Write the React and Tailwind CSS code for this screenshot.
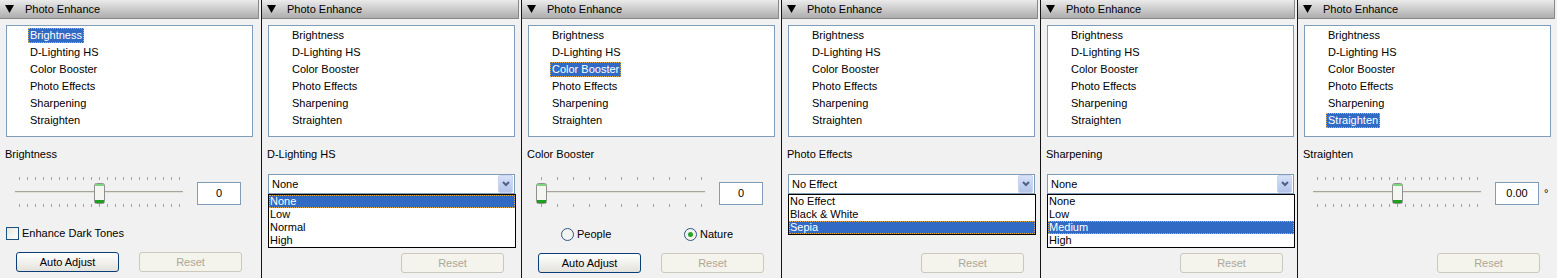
import clsx from "clsx";

const ITEMS = [
  "Brightness",
  "D-Lighting HS",
  "Color Booster",
  "Photo Effects",
  "Sharpening",
  "Straighten",
];

const Header = () => (
  <div className="h-[19px] mr-[2px] shrink-0 flex items-center bg-linear-to-b from-[#ebebeb] to-[#adadad] border-b border-r border-[#888888]">
    <svg width="9" height="8" className="ml-[5px] block">
      <polygon points="0,0 9,0 4.5,8" fill="#000" />
    </svg>
    <span className="ml-[11px] mt-[1px] leading-none">Photo Enhance</span>
  </div>
);

const ListBox = ({ selected }) => (
  <div className="mt-[6px] ml-[6px] w-[247px] h-[112px] shrink-0 border border-[#7f9db9] bg-white pt-[2px]">
    {ITEMS.map((item, i) => (
      <div key={item} className="h-[17px] pl-[21px] flex items-start">
        <span
          className={clsx(
            "h-[15px] px-[2px] leading-[15px]",
            i === selected &&
              "bg-[#316ac5] text-white outline-1 outline-dotted outline-[#e3a94a] -outline-offset-1"
          )}
        >
          {item}
        </span>
      </div>
    ))}
  </div>
);

const Label = ({ children }) => (
  <div className="mt-[11px] ml-[5px] h-[13px] leading-[13px] shrink-0">{children}</div>
);

const Slider = ({ ticks, thumb }) => {
  const step = 160 / (ticks - 1);
  return (
    <svg width="190" height="32" className="block shrink-0">
      {Array.from({ length: ticks }).map((_, i) => {
        const x = Math.round(19 + i * step) + 0.5;
        return (
          <g key={i} stroke="#a3a3a3">
            <line x1={x} x2={x} y1={1} y2={4} />
            <line x1={x} x2={x} y1={28} y2={31} />
          </g>
        );
      })}
      <rect x="15" y="15" width="168" height="1" fill="#a6a49b" />
      <rect x="15" y="16" width="168" height="1" fill="#e2e0d8" />
      <rect x={thumb + 0.5} y="7.5" width="10" height="20" rx="2" fill="#f5f5f1" stroke="#8f8f8f" />
      <rect x={thumb + 1} y="8" width="9" height="2" fill="#7fd27f" />
      <rect x={thumb + 1} y="24" width="9" height="3" fill="#1f9f1f" />
    </svg>
  );
};

const ValueBox = ({ children }) => (
  <div className="ml-[7px] mt-[6px] w-[44px] h-[23px] shrink-0 border border-[#7f9db9] bg-white flex items-center justify-center">
    {children}
  </div>
);

const Radio = ({ checked, label }) => (
  <div className="flex items-center">
    <svg width="13" height="13" className="block">
      <circle cx="6.5" cy="6.5" r="6" fill="#f3f3ef" stroke="#2f5582" />
      {checked && <circle cx="6.5" cy="6.5" r="2.5" fill="#27a327" />}
    </svg>
    <span className="ml-[3px]">{label}</span>
  </div>
);

const Combo = ({ value, options, selected }) => (
  <div className="relative mt-[13px] ml-[6px] w-[247px] h-[20px] shrink-0 border border-[#7f9db9] bg-white flex items-center">
    <span className="pl-[3px] flex-1">{value}</span>
    <div className="self-stretch w-[15px] mr-[1px] rounded-[2px] border border-[#c9d5f0] bg-linear-to-b from-[#d7e1f8] to-[#b3c4e9] flex items-center justify-center">
      <svg width="8" height="6" className="block">
        <polyline points="1,1 4,4 7,1" fill="none" stroke="#4d6185" strokeWidth="2" />
      </svg>
    </div>
    <div className="absolute left-[-1px] top-[19px] w-[248px] border border-black bg-white z-10">
      {options.map((opt, i) => (
        <div
          key={opt}
          className={clsx(
            "h-[13px] leading-[13px] pl-[1px]",
            i === selected &&
              "bg-[#316ac5] text-white outline-1 outline-dotted outline-[#e3a94a] -outline-offset-1"
          )}
        >
          {opt}
        </div>
      ))}
    </div>
  </div>
);

const Buttons = ({ auto, low }) => (
  <div className={clsx("mt-auto flex h-[20px] shrink-0", low ? "mb-[5px]" : "mb-[6px]")}>
    {auto && (
      <button className="ml-[16px] w-[103px] h-[20px] rounded-[3px] border border-[#0b3d78] bg-linear-to-b from-white to-[#e3e2dc] flex items-center justify-center">
        Auto Adjust
      </button>
    )}
    <button
      disabled
      className={clsx(
        auto ? "ml-[20px]" : "ml-[139px]",
        "w-[103px] h-[20px] rounded-[3px] border border-[#cbc9bd] bg-[#f4f3ec] text-[#aca899] flex items-center justify-center"
      )}
    >
      Reset
    </button>
  </div>
);

const Panel = ({ className, first, children }) => (
  <div
    className={clsx(
      "h-[278px] shrink-0 flex flex-col bg-[#f1f1f1]",
      !first && "border-l border-[#141414]",
      className
    )}
  >
    <Header />
    {children}
  </div>
);

export default function App() {
  return (
    <div className="w-[1557px] h-[278px] flex overflow-hidden text-[11px] text-black font-['Liberation_Sans',Arial,sans-serif]">
      <Panel first className="w-[261px]">
        <ListBox selected={0} />
        <Label>Brightness</Label>
        <div className="mt-[15px] flex items-start shrink-0">
          <Slider ticks={21} thumb={94} />
          <ValueBox>0</ValueBox>
        </div>
        <div className="mt-[19px] ml-[6px] h-[13px] flex items-center shrink-0">
          <div className="w-[13px] h-[13px] border border-[#1c5180] bg-linear-to-br from-[#e6e6df] to-white" />
          <span className="ml-[3px]">Enhance Dark Tones</span>
        </div>
        <Buttons auto />
      </Panel>

      <Panel className="w-[260px]">
        <ListBox selected={-1} />
        <Label>D-Lighting HS</Label>
        <Combo value="None" options={["None", "Low", "Normal", "High"]} selected={0} />
        <Buttons low />
      </Panel>

      <Panel className="w-[260px]">
        <ListBox selected={2} />
        <Label>Color Booster</Label>
        <div className="mt-[15px] flex items-start shrink-0">
          <Slider ticks={11} thumb={14} />
          <ValueBox>0</ValueBox>
        </div>
        <div className="mt-[20px] h-[13px] flex items-center shrink-0">
          <div className="ml-[39px] w-[123px]">
            <Radio label="People" />
          </div>
          <Radio checked label="Nature" />
        </div>
        <Buttons auto low />
      </Panel>

      <Panel className="w-[259px]">
        <ListBox selected={-1} />
        <Label>Photo Effects</Label>
        <Combo value="No Effect" options={["No Effect", "Black & White", "Sepia"]} selected={2} />
        <Buttons low />
      </Panel>

      <Panel className="w-[257px]">
        <ListBox selected={-1} />
        <Label>Sharpening</Label>
        <Combo value="None" options={["None", "Low", "Medium", "High"]} selected={2} />
        <Buttons low />
      </Panel>

      <Panel className="w-[260px]">
        <ListBox selected={5} />
        <Label>Straighten</Label>
        <div className="mt-[15px] flex items-start shrink-0">
          <Slider ticks={21} thumb={94} />
          <ValueBox>0.00</ValueBox>
          <span className="ml-[5px] mt-[6px] leading-[23px]">°</span>
        </div>
        <Buttons low />
      </Panel>
    </div>
  );
}
